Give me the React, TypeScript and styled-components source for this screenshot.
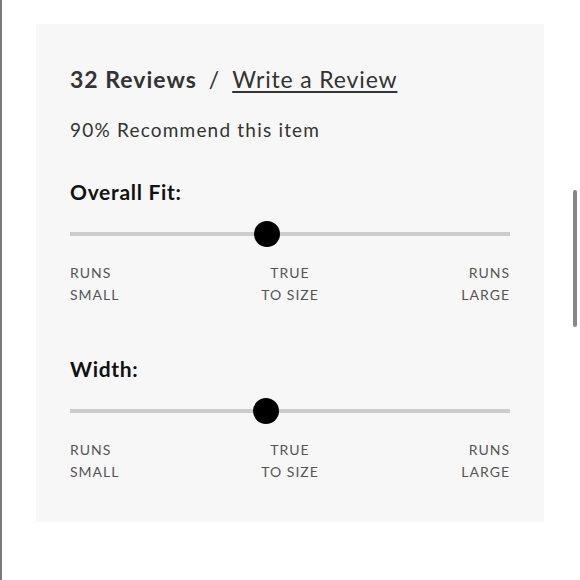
import styled, { createGlobalStyle } from 'styled-components';

const GlobalStyle = createGlobalStyle`
  html, body {
    margin: 0;
    padding: 0;
    background: #ffffff;
  }
  body {
    font-family: Lato, 'Open Sans', sans-serif;
    overflow: hidden;
  }
`;

interface FitScale {
  title: string;
  value: number;
}

const scales: FitScale[] = [
  { title: 'Overall Fit:', value: 0.448 },
  { title: 'Width:', value: 0.445 },
];

const App = () => {
  return (
    <>
      <GlobalStyle />
      <Page>
        <Panel>
          <Header>
            <Count>32 Reviews</Count>
            <Slash>/</Slash>
            <WriteLink href="#">Write a Review</WriteLink>
          </Header>
          <Recommend>90% Recommend this item</Recommend>
          {scales.map((scale, index) => (
            <Section key={scale.title} $first={index === 0}>
              <SectionTitle>{scale.title}</SectionTitle>
              <Slider>
                <Track />
                <Thumb style={{ left: `${scale.value * 100}%` }} />
              </Slider>
              <Labels>
                <Label $align="left">
                  RUNS
                  <br />
                  SMALL
                </Label>
                <Label $align="center">
                  TRUE
                  <br />
                  TO SIZE
                </Label>
                <Label $align="right">
                  RUNS
                  <br />
                  LARGE
                </Label>
              </Labels>
            </Section>
          ))}
        </Panel>
        <ScrollThumb />
      </Page>
    </>
  );
};

export default App;

const Page = styled.div`
  position: relative;
  box-sizing: border-box;
  height: 580px;
  border-left: 2px solid #7a7a7a;
  padding: 24px 0 0 34px;
`;

const Panel = styled.div`
  box-sizing: border-box;
  width: 508px;
  height: 498px;
  background-color: #f7f7f7;
  padding: 40px 34px 0 34px;
`;

const Header = styled.div`
  display: flex;
  align-items: baseline;
  font-size: 23px;
  line-height: 30px;
  color: #333333;
`;

const Count = styled.span`
  font-weight: 700;
  letter-spacing: 1px;
`;

const Slash = styled.span`
  margin: 0 13px 0 12px;
`;

const WriteLink = styled.a`
  color: #333333;
  text-decoration: underline;
  text-underline-offset: 3px;
  text-decoration-thickness: 1.5px;
  letter-spacing: 0.85px;
`;

const Recommend = styled.div`
  margin-top: 23px;
  font-size: 19px;
  line-height: 26px;
  color: #333333;
  letter-spacing: 1.2px;
`;

const Section = styled.div<{ $first: boolean }>`
  margin-top: ${(p) => (p.$first ? '35px' : '49px')};
`;

const SectionTitle = styled.div`
  font-size: 21px;
  line-height: 28px;
  font-weight: 700;
  color: #111111;
  letter-spacing: 0.7px;
`;

const Slider = styled.div`
  position: relative;
  height: 26px;
  margin-top: 15px;
  display: flex;
  align-items: center;
`;

const Track = styled.div`
  width: 100%;
  height: 4px;
  background-color: #cccccc;
`;

const Thumb = styled.div`
  position: absolute;
  top: 0;
  width: 26px;
  height: 26px;
  margin-left: -13px;
  border-radius: 50%;
  background-color: #000000;
`;

const Labels = styled.div`
  display: grid;
  grid-template-columns: 1fr 1fr 1fr;
  margin-top: 15px;
`;

const Label = styled.div<{ $align: 'left' | 'center' | 'right' }>`
  text-align: ${(p) => p.$align};
  font-size: 14px;
  line-height: 22px;
  letter-spacing: 1px;
  color: #555555;
`;

const ScrollThumb = styled.div`
  position: absolute;
  left: 571px;
  top: 190px;
  width: 4px;
  height: 137px;
  border-radius: 2px;
  background-color: #888888;
`;
